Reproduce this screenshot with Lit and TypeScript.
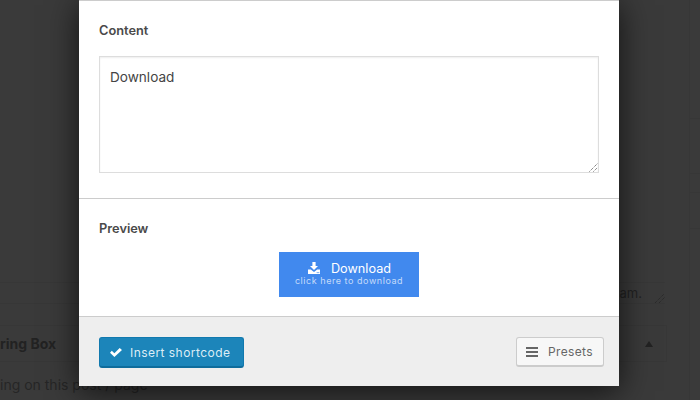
import { LitElement, html, css } from "lit";
import { customElement } from "lit/decorators.js";

@customElement("app-root")
export class AppRoot extends LitElement {
  static styles = css`
    :host {
      display: block;
      position: relative;
      width: 700px;
      height: 400px;
      overflow: hidden;
      background: #3a3a3a;
      font-family: Inter, "Liberation Sans", sans-serif;
      color: #444;
    }
    .backdrop {
      height: 400px;
      display: flex;
      flex-direction: column;
      color: #222;
    }
    .bg-side {
      position: absolute;
      left: 689px;
      top: 0;
      width: 11px;
      height: 400px;
      box-sizing: border-box;
      border-left: 1px solid #373737;
      display: flex;
      flex-direction: column;
    }
    .bg-side div { border-bottom: 1px solid #373737; }
    .s1 { height: 118px; }
    .s2 { height: 54px; }
    .s3 { height: 18px; }
    .s4 { height: 35px; }
    .bg-top { height: 282px; }
    .bg-notice {
      height: 22px;
      box-sizing: border-box;
      width: 665px;
      display: flex;
      justify-content: flex-end;
      align-items: center;
      padding-right: 23px;
      font-size: 13px;
      border-top: 1px solid #373737;
      border-bottom: 1px solid #373737;
      position: relative;
    }
    .bg-grip {
      position: absolute;
      right: 0;
      bottom: 0;
      width: 11px;
      height: 9px;
    }
    .bg-gap { height: 21px; }
    .bg-head {
      height: 37px;
      box-sizing: border-box;
      width: 667px;
      display: flex;
      justify-content: space-between;
      align-items: center;
      font-size: 14px;
      font-weight: 700;
      border-top: 1px solid #373737;
      border-bottom: 1px solid #373737;
      border-right: 1px solid #373737;
      padding-right: 13px;
    }
    .tri {
      width: 0;
      height: 0;
      border-left: 4px solid transparent;
      border-right: 4px solid transparent;
      border-bottom: 6px solid #222;
    }
    .bg-text { font-size: 14px; padding-top: 14px; line-height: 17px; color: #262626; }
    .modal {
      position: absolute;
      left: 79px;
      top: 0;
      width: 540px;
      height: 386px;
      background: #fff;
      display: flex;
      flex-direction: column;
      box-shadow: 0 5px 30px rgba(0, 0, 0, 0.7);
    }
    .content {
      height: 199px;
      box-sizing: border-box;
      border-top: 1px solid #ccc;
      border-bottom: 1px solid #ccc;
      padding: 23px 20px 0;
    }
    .label {
      font-size: 12.8px;
      font-weight: 600;
      line-height: 14px;
      color: #4a4a4a;
    }
    .area {
      position: relative;
      box-sizing: border-box;
      height: 117px;
      margin-top: 18px;
      border: 1px solid #ddd;
      box-shadow: inset 0 1px 2px rgba(0, 0, 0, 0.07);
      padding: 10px 10px;
      font-size: 13.6px;
      line-height: 20px;
      color: #444;
    }
    .grip {
      position: absolute;
      right: 0;
      bottom: 0;
      width: 9px;
      height: 9px;
      display: block;
    }
    .preview {
      height: 117px;
      box-sizing: border-box;
      padding: 23px 20px 0;
    }
    .dl {
      box-sizing: border-box;
      width: 140px;
      height: 45px;
      margin: 16px auto 0;
      background: #4189ee;
      color: #fff;
      text-align: center;
      padding-top: 9px;
    }
    .dl-main {
      display: flex;
      justify-content: center;
      align-items: center;
      gap: 11px;
      padding-left: 1px;
      font-size: 12.7px;
      line-height: 15px;
    }
    .dl-main svg { width: 12px; height: 12px; margin-top: -2px; }
    .dl-sub {
      font-size: 9px;
      letter-spacing: 0.55px;
      line-height: 11px;
      margin-top: -1px;
      color: rgba(255, 255, 255, 0.7);
    }
    .foot {
      flex: 1;
      box-sizing: border-box;
      border-top: 1px solid #ccc;
      background: #eee;
      padding: 20px 15px 0 20px;
      display: flex;
      justify-content: space-between;
      align-items: flex-start;
    }
    .btn {
      box-sizing: border-box;
      height: 31px;
      display: flex;
      align-items: center;
      border-radius: 3px;
      font-size: 12px;
      letter-spacing: 0.45px;
    }
    .primary {
      width: 145px;
      padding-left: 10px;
      gap: 8px;
      background: #1c85ba;
      border: 1px solid #1179ae;
      border-bottom: 2px solid #0e6c9c;
      color: #dcedf6;
    }
    .secondary {
      width: 88px;
      height: 30px;
      padding-left: 9px;
      gap: 10px;
      background: #f7f7f7;
      border: 1px solid #ccc;
      border-bottom: 2px solid #ccc;
      color: #666;
      letter-spacing: 0.35px;
    }
    .primary svg { width: 12px; height: 9px; flex: none; }
    .secondary svg { width: 12px; height: 10px; flex: none; }
  `;

  render() {
    return html`
      <div class="backdrop">
        <div class="bg-top"></div>
        <div class="bg-notice">
          am.
          <svg class="bg-grip" viewBox="0 0 11 9">
            <path d="M1 9L10 0M5 9L11 3" stroke="#262626" stroke-width="1" stroke-dasharray="1 1" fill="none" />
          </svg>
        </div>
        <div class="bg-gap"></div>
        <div class="bg-head"><span>ring Box</span><span class="tri"></span></div>
        <div class="bg-text">ing on this post / page</div>
      </div>
      <div class="bg-side">
        <div class="s1"></div>
        <div class="s2"></div>
        <div class="s3"></div>
        <div class="s4"></div>
      </div>
      <div class="modal">
        <div class="content">
          <div class="label">Content</div>
          <div class="area">
            Download
            <svg class="grip" viewBox="0 0 9 9">
              <path d="M0.5 8.5L8.5 0.5M4.5 8.5L8.5 4.5" stroke="#555" stroke-width="1" stroke-dasharray="1 1" fill="none" />
            </svg>
          </div>
        </div>
        <div class="preview">
          <div class="label">Preview</div>
          <div class="dl">
            <div class="dl-main">
              <svg viewBox="0 0 12 12">
                <path d="M4.4 0h3.2v4h2.4L6 8 2 4h2.4z" fill="#fff" />
                <path d="M0 7.4h2.8L6 10l3.2-2.6H12V12H0z" fill="#fff" />
                <circle cx="9.2" cy="10.6" r=".55" fill="#4189ee" />
                <circle cx="10.8" cy="10.6" r=".55" fill="#4189ee" />
              </svg>
              <span>Download</span>
            </div>
            <div class="dl-sub">click here to download</div>
          </div>
        </div>
        <div class="foot">
          <div class="btn primary">
            <svg viewBox="0 0 12 9">
              <path d="M0 4.7L1.8 2.8 4.4 5.3 9.7 0 12 2 4.4 9z" fill="#fff" />
            </svg>
            <span>Insert shortcode</span>
          </div>
          <div class="btn secondary">
            <svg viewBox="0 0 12 10">
              <path d="M0 0h12v2H0zM0 4h12v2H0zM0 8h12v2H0z" fill="#666" />
            </svg>
            <span>Presets</span>
          </div>
        </div>
      </div>
    `;
  }
}
